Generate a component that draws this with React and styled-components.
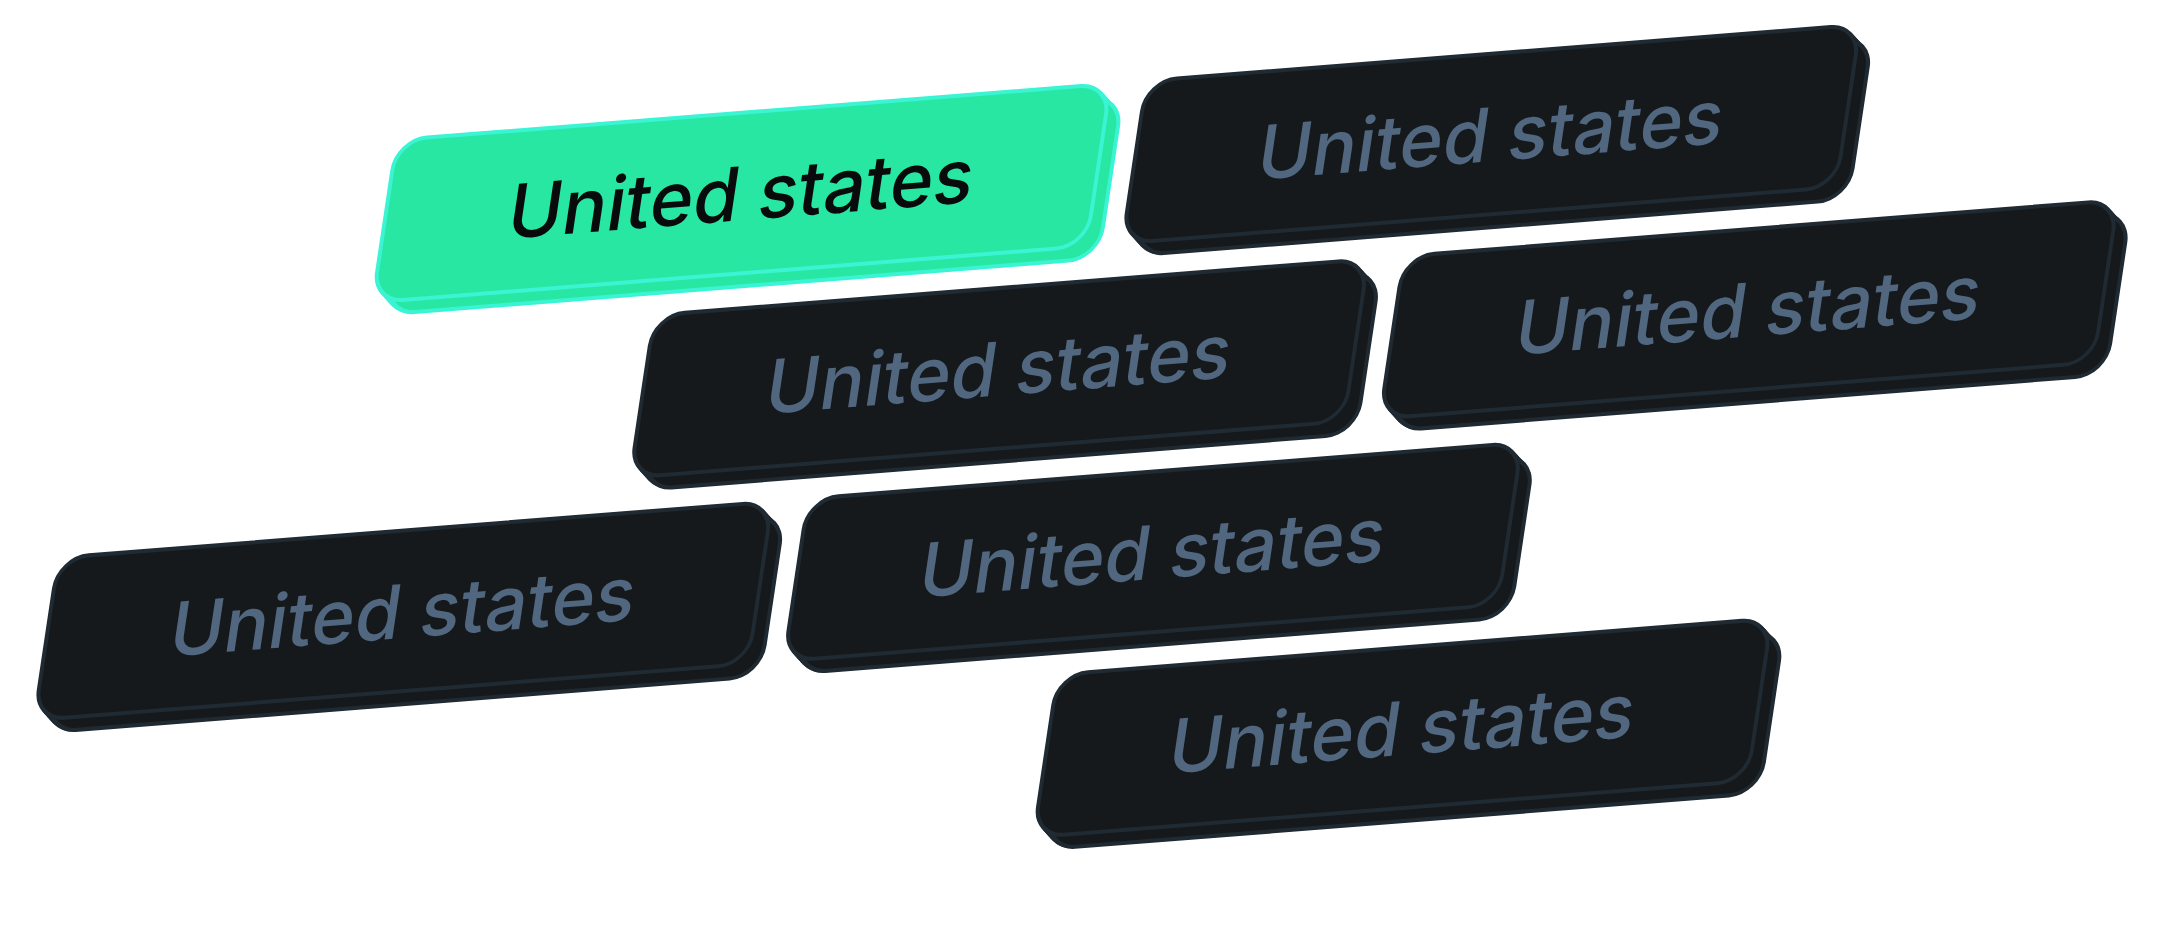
import React from "react";
import styled, { createGlobalStyle } from "styled-components";

const rows = [
  { indent: 280, tiles: [{ label: "United states", active: true }, { label: "United states" }] },
  { indent: 568, tiles: [{ label: "United states" }, { label: "United states" }] },
  { indent: 0, tiles: [{ label: "United states" }, { label: "United states" }] },
  { indent: 1032, tiles: [{ label: "United states" }] },
];

const App = () => {
  return (
    <Container>
      <GlobalStyle />
      <Board>
        {rows.map((row, i) => (
          <Row key={i} $indent={row.indent}>
            {row.tiles.map((tile, j) => (
              <Tile key={j} type="button" $active={tile.active}>
                {tile.label}
              </Tile>
            ))}
          </Row>
        ))}
      </Board>
    </Container>
  );
};

export default App;

const GlobalStyle = createGlobalStyle`
  body {
    margin: 0;
    background: #ffffff;
  }
`;

const Container = styled.main`
  overflow: hidden;
  padding: 160px 0 0 116px;
`;

/* the whole board is tilted, the tiles inside sit on a straight grid */
const Board = styled.div`
  display: flex;
  flex-direction: column;
  gap: 31px;
  transform: rotate(-4.5deg) skewX(-13deg);
  transform-origin: 0 0;
`;

const Row = styled.div`
  display: flex;
  gap: 32px;
  padding-left: ${({ $indent }) => $indent}px;
`;

const Tile = styled.button`
  --fill: ${({ $active }) => ($active ? "#27e7a2" : "#15191c")};
  --edge: ${({ $active }) => ($active ? "#3af4d4" : "#202a32")};
  flex: none;
  box-sizing: border-box;
  width: 720px;
  height: 164px;
  padding: 0;
  border: 4px solid var(--edge);
  border-radius: 32px;
  background: var(--fill);
  color: ${({ $active }) => ($active ? "#080a0c" : "#51677f")};
  font-family: Inter, "Liberation Sans", sans-serif;
  font-size: 74px;
  font-weight: 500;
  line-height: 84px;
  cursor: pointer;
  /* thickness of the key: an inset fill over a stack of edges */
  box-shadow:
    14px 13px 0 -4px var(--fill),
    2px 2px 0 var(--edge),
    4px 4px 0 var(--edge),
    6px 6px 0 var(--edge),
    8px 8px 0 var(--edge),
    10px 10px 0 var(--edge),
    12px 12px 0 var(--edge),
    14px 13px 0 var(--edge);
`;
